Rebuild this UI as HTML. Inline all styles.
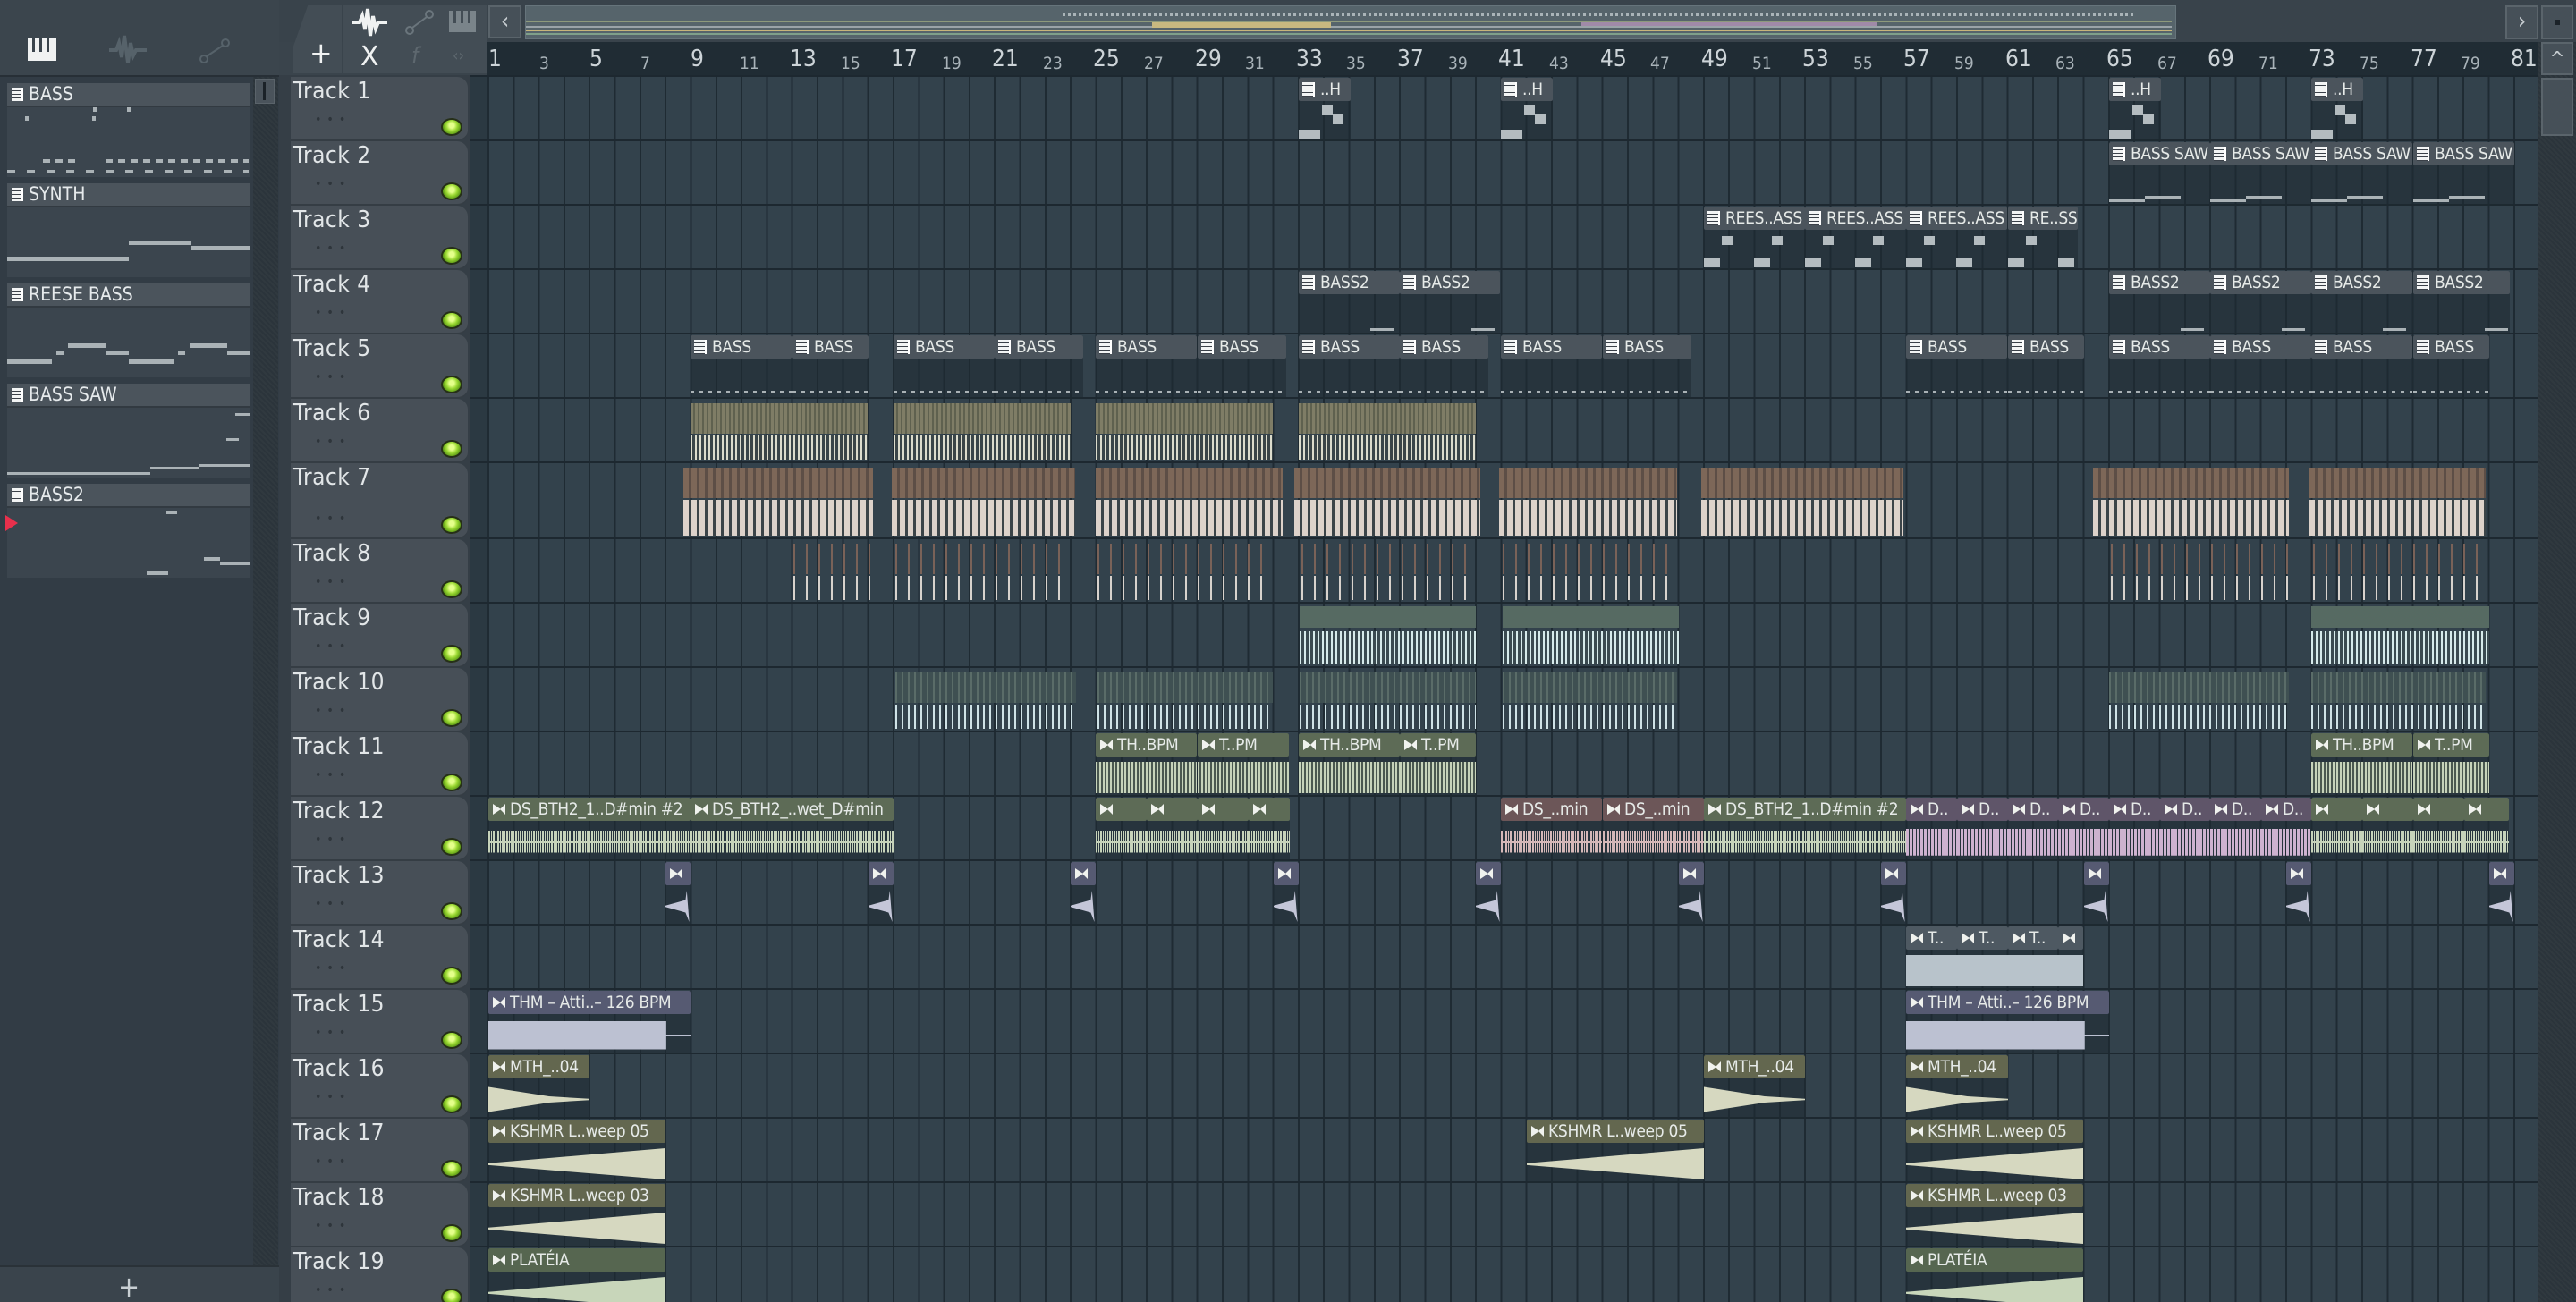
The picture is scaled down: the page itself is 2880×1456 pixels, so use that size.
<!DOCTYPE html>
<html><head><meta charset="utf-8">
<style>
*{box-sizing:border-box;margin:0;padding:0}
html,body{width:2880px;height:1456px;overflow:hidden;background:#3a444c}
body{position:relative;font-family:"Liberation Sans Narrow","DejaVu Sans Condensed","Liberation Sans",sans-serif;color:#dde3e6}
.a{position:absolute}
#grid{position:absolute;left:525px;top:84px;width:2313px;height:1372px;background:#33424c;overflow:hidden}
#grid .lines{position:absolute;left:20px;top:0;right:0;bottom:0;background:repeating-linear-gradient(90deg,#1f2b33 0 2px,transparent 2px 28.31px)}
#grid .dk{position:absolute;left:0;top:0;width:20px;bottom:0;background:#2b3942}
.tl{position:absolute;left:0;right:0;height:2px;background:#1d2830}
.th{position:absolute;left:325px;width:198px;background:#474f57;border-radius:0 12px 12px 0;border-bottom:2px solid #353d44}
.th b{position:absolute;left:3px;top:1px;font-weight:normal;font-size:26px;color:#e2e6e8;letter-spacing:.5px}
.th i{position:absolute;left:27px;top:40px;font-style:normal;font-size:14px;color:#2e353b;letter-spacing:1px}
.th u{position:absolute;left:168px;width:24px;height:20px;border-radius:50%;background:radial-gradient(circle at 50% 40%,#e4ff8a 0 20%,#9ad832 45%,#4e8a10 80%);border:2px solid #263018;bottom:4px}
.c{position:absolute;height:71px;background:rgba(30,42,50,.55);overflow:hidden;border-radius:2px}
.c .h{position:absolute;left:0;top:0;right:0;height:26px;font-size:19px;line-height:26px;padding-left:24px;white-space:nowrap;overflow:hidden;color:#e6eae8;border-radius:2px;letter-spacing:-.3px}
.p .h{background:#4b545c}
.p .h::before{content:"";position:absolute;left:4px;top:5px;width:12px;height:16px;background:repeating-linear-gradient(180deg,#f2f4f4 0 3px,#3a4048 3px 4px);border-right:2px solid #fff}
.au .h::before{content:"";position:absolute;left:5px;top:7px;border-left:9px solid #f0f2ee;border-top:6px solid transparent;border-bottom:6px solid transparent}
.au .h::after{content:"";position:absolute;left:13px;top:7px;border-right:6px solid #f0f2ee;border-top:6px solid transparent;border-bottom:6px solid transparent}
.w{position:absolute;left:0;right:0;top:32px;bottom:4px}
.g .h{background:#5d6b56}.g .w{background:repeating-linear-gradient(90deg,#c6d3ba 0 2px,transparent 2px 3px,#c6d3ba 3px 4px,transparent 4px 5px) center/100% 70% no-repeat,linear-gradient(#c6d3ba,#c6d3ba) center/100% 2px no-repeat}
.pk .h{background:#6c5658}.pk .w{background:repeating-linear-gradient(90deg,#d5b8b8 0 2px,transparent 2px 3px,#d5b8b8 3px 4px,transparent 4px 5px) center/100% 70% no-repeat,linear-gradient(#d5b8b8,#d5b8b8) center/100% 2px no-repeat}
.pu .h{background:#5f5569}.pu .w{background:repeating-linear-gradient(90deg,#cdb2cf 0 3px,transparent 3px 4px) center/100% 85% no-repeat}
.vi .h{background:#565a72}
.vi .w{background:linear-gradient(#bcc1d2,#bcc1d2) left center/88% 90% no-repeat,linear-gradient(#bcc1d2,#bcc1d2) center/100% 2px no-repeat;border-radius:0 18px 18px 0}
.lb .h{background:#4e5962}.lb .w{background:#b8c3cb}
.ol .h{background:#63674f}
.ol .w{background:#d6d8c0;clip-path:polygon(0 48%,100% 0,100% 100%,0 54%)}
.dec .w{background:#d6d8c0;clip-path:polygon(0 10%,60% 40%,100% 48%,100% 52%,60% 60%,0 90%)}
.sm .h{background:#565a72;padding:0}
.sm .w{background:#c4c6d8;clip-path:polygon(0 48%,80% 30%,85% 0,95% 100%,80% 70%,0 52%)}
.s{position:absolute;height:71px;overflow:hidden}
.s .t{position:absolute;left:0;right:0;top:4px;height:34px}
.s .b{position:absolute;left:0;right:0;top:40px;bottom:4px}
#ruler{position:absolute;left:545px;top:47px;width:2293px;height:37px;background:#202c34}
.rn{position:absolute;bottom:3px;color:#cdd4d8;font-size:26px}
.rs{position:absolute;bottom:2px;color:#a9b3b9;font-size:19px}
.ch{position:absolute;left:8px;width:271px}
.ch .hd{height:25px;background:#4b545c;font-size:21px;line-height:25px;padding-left:24px;position:relative;color:#e6eaec}
.ch .hd::before{content:"";position:absolute;left:5px;top:5px;width:11px;height:15px;background:repeating-linear-gradient(180deg,#f2f4f4 0 3px,#3a4048 3px 4px);border-right:2px solid #fff}
.ch .pv{height:80px;background:#3b454e;position:relative;border-top:2px solid #323a41;overflow:hidden}
.n{position:absolute;background:#aab2b6;height:5px}
</style></head><body>

<div class="a" style="left:0;top:0;width:312px;height:84px;background:#3b454d"></div>
<div class="a" style="left:31px;top:42px;width:32px;height:26px;background:#f0f2f2"></div>
<div class="a" style="left:36px;top:42px;width:3px;height:16px;background:#3b454d"></div>
<div class="a" style="left:44px;top:42px;width:3px;height:16px;background:#3b454d"></div>
<div class="a" style="left:52px;top:42px;width:3px;height:16px;background:#3b454d"></div>
<svg class="a" style="left:120px;top:38px" width="44" height="36"><path d="M2 18h8l3-8 3 16 3-24 4 30 3-22 3 14 3-6h12" stroke="#56626a" stroke-width="4" fill="none"/></svg>
<svg class="a" style="left:222px;top:42px" width="36" height="30"><circle cx="6" cy="24" r="4" stroke="#56626a" stroke-width="2" fill="none"/><circle cx="30" cy="6" r="4" stroke="#56626a" stroke-width="2" fill="none"/><path d="M9 21 27 9" stroke="#56626a" stroke-width="2"/></svg>

<div class="a" style="left:0;top:84px;width:312px;height:1331px;background:#323c45;border-top:2px solid #272f36"></div>
<div class="a" style="left:283px;top:86px;width:28px;height:1329px;background:repeating-linear-gradient(45deg,#2b343b 0 2px,#30393f 2px 4px)"></div>
<div class="a" style="left:285px;top:88px;width:22px;height:28px;background:#4a535b;border:1px solid #5a636a"></div>
<div class="a" style="left:294px;top:92px;width:3px;height:20px;background:#1b2228"></div>
<div class="a" style="left:0;top:1415px;width:312px;height:41px;background:#3a444c;border-top:2px solid #2a3238"></div>
<div class="a" style="left:132px;top:1420px;font-size:32px;color:#c8cfd3">+</div>

<div class="ch" style="top:93px"><div class="hd">BASS</div><div class="pv">
<div class="n" style="left:96px;top:0;width:4px;height:5px"></div><div class="n" style="left:134px;top:0;width:4px"></div><div class="n" style="left:20px;top:10px;width:4px"></div><div class="n" style="left:95px;top:10px;width:4px"></div>
<div class="n" style="left:40px;top:58px;width:40px;height:4px;background:repeating-linear-gradient(90deg,#aab2b6 0 8px,transparent 8px 14px)"></div>
<div class="n" style="left:110px;top:58px;width:160px;height:4px;background:repeating-linear-gradient(90deg,#aab2b6 0 8px,transparent 8px 14px)"></div>
<div class="n" style="left:0;top:70px;width:270px;height:4px;background:repeating-linear-gradient(90deg,#aab2b6 0 9px,transparent 9px 22px)"></div>
</div></div>
<div class="ch" style="top:205px"><div class="hd">SYNTH</div><div class="pv">
<div class="n" style="left:0;top:55px;width:136px"></div><div class="n" style="left:136px;top:37px;width:69px"></div><div class="n" style="left:205px;top:43px;width:66px"></div>
</div></div>
<div class="ch" style="top:317px"><div class="hd">REESE BASS</div><div class="pv">
<div class="n" style="left:0;top:58px;width:50px"></div><div class="n" style="left:55px;top:48px;width:8px"></div><div class="n" style="left:68px;top:40px;width:42px"></div><div class="n" style="left:110px;top:48px;width:26px"></div><div class="n" style="left:136px;top:58px;width:50px"></div><div class="n" style="left:191px;top:48px;width:8px"></div><div class="n" style="left:204px;top:40px;width:42px"></div><div class="n" style="left:246px;top:48px;width:25px"></div>
</div></div>
<div class="ch" style="top:429px"><div class="hd">BASS SAW</div><div class="pv">
<div class="n" style="left:0;top:72px;width:160px;height:3px"></div><div class="n" style="left:160px;top:66px;width:55px;height:3px"></div><div class="n" style="left:215px;top:63px;width:56px;height:3px"></div><div class="n" style="left:245px;top:34px;width:14px;height:3px"></div><div class="n" style="left:255px;top:6px;width:16px;height:3px"></div>
</div></div>
<div class="ch" style="top:541px"><div class="hd">BASS2</div><div class="pv">
<div class="n" style="left:178px;top:3px;width:12px;height:4px"></div><div class="n" style="left:220px;top:55px;width:18px;height:4px"></div><div class="n" style="left:238px;top:60px;width:33px;height:4px"></div><div class="n" style="left:156px;top:71px;width:24px;height:4px"></div>
</div></div>
<div class="a" style="left:6px;top:576px;width:0;height:0;border-left:14px solid #e8304c;border-top:9px solid transparent;border-bottom:9px solid transparent"></div>

<div class="a" style="left:312px;top:0;width:2568px;height:47px;background:#39434b"></div>
<div class="a" style="left:328px;top:6px;width:54px;height:76px;background:#434d55;clip-path:polygon(30% 0,100% 0,100% 100%,0 100%,0 60%)"></div>
<div class="a" style="left:384px;top:6px;width:160px;height:76px;background:#434d55"></div>
<div class="a" style="left:346px;top:40px;font-size:34px;color:#f0f2f2">+</div>
<svg class="a" style="left:392px;top:8px" width="44" height="34"><path d="M2 17h8l3-7 3 14 3-22 3 30 3-22 3 14 3-7h10" stroke="#f0f2f2" stroke-width="4" fill="none"/></svg>
<svg class="a" style="left:452px;top:10px" width="34" height="30"><circle cx="6" cy="24" r="4" stroke="#6a757c" stroke-width="2" fill="none"/><circle cx="28" cy="6" r="4" stroke="#6a757c" stroke-width="2" fill="none"/><path d="M9 21 25 9" stroke="#6a757c" stroke-width="2"/></svg>
<div class="a" style="left:502px;top:12px;width:30px;height:24px;background:#7a848a"></div>
<div class="a" style="left:507px;top:12px;width:3px;height:14px;background:#434d55"></div><div class="a" style="left:515px;top:12px;width:3px;height:14px;background:#434d55"></div><div class="a" style="left:523px;top:12px;width:3px;height:14px;background:#434d55"></div>
<div class="a" style="left:403px;top:46px;font-size:30px;color:#f0f2f2;font-family:'DejaVu Sans',sans-serif">X</div>
<div class="a" style="left:460px;top:48px;font-size:26px;color:#5e686f;font-style:italic">f</div>
<div class="a" style="left:506px;top:52px;font-size:18px;color:#5e686f">‹›</div>
<div class="a" style="left:546px;top:6px;width:37px;height:37px;background:#465058;border:2px solid #5a646b;color:#c6ccd0;font-size:26px;line-height:32px;text-align:center">‹</div>
<div class="a" style="left:587px;top:6px;width:1846px;height:38px;background:#56646b;border:1px solid #66747b">
  <div class="a" style="left:0;top:16px;width:1840px;height:2px;background:#8e9a7c"></div>
  <div class="a" style="left:0;top:22px;width:1840px;height:2px;background:#9aa3a8"></div>
  <div class="a" style="left:0;top:26px;width:1840px;height:2px;background:#c7b57a"></div>
  <div class="a" style="left:0;top:30px;width:1840px;height:2px;background:#7fa08a"></div>
  <div class="a" style="left:700px;top:18px;width:200px;height:6px;background:#c8b880"></div>
  <div class="a" style="left:1180px;top:18px;width:330px;height:4px;background:#a08aa8"></div>
  <div class="a" style="left:600px;top:8px;width:1200px;height:3px;background:repeating-linear-gradient(90deg,#aab4b8 0 3px,transparent 3px 6px)"></div>
</div>
<div class="a" style="left:2801px;top:6px;width:37px;height:38px;background:#465058;border:2px solid #5a646b;color:#c6ccd0;font-size:26px;line-height:32px;text-align:center">›</div>
<div class="a" style="left:2841px;top:6px;width:36px;height:38px;background:#465058;border:2px solid #5a646b"></div>
<div class="a" style="left:2856px;top:22px;width:6px;height:6px;background:#1b2228"></div>
<div class="a" style="left:2838px;top:47px;width:42px;height:1409px;background:repeating-linear-gradient(45deg,#2b343b 0 2px,#30393f 2px 4px)"></div>
<div class="a" style="left:2841px;top:47px;width:36px;height:37px;background:#465058;border:2px solid #5a646b;color:#c6ccd0;font-size:22px;text-align:center;line-height:36px">^</div>
<div class="a" style="left:2841px;top:87px;width:36px;height:65px;background:#465058;border:2px solid #5a646b"></div>

<div id="ruler">
<span class="rn" style="left:1px">1</span><span class="rs" style="left:58px">3</span><span class="rn" style="left:114px">5</span><span class="rs" style="left:171px">7</span><span class="rn" style="left:227px">9</span><span class="rs" style="left:282px">11</span><span class="rn" style="left:338px">13</span><span class="rs" style="left:395px">15</span><span class="rn" style="left:451px">17</span><span class="rs" style="left:508px">19</span><span class="rn" style="left:564px">21</span><span class="rs" style="left:621px">23</span><span class="rn" style="left:677px">25</span><span class="rs" style="left:734px">27</span><span class="rn" style="left:791px">29</span><span class="rs" style="left:847px">31</span><span class="rn" style="left:904px">33</span><span class="rs" style="left:960px">35</span><span class="rn" style="left:1017px">37</span><span class="rs" style="left:1074px">39</span><span class="rn" style="left:1130px">41</span><span class="rs" style="left:1187px">43</span><span class="rn" style="left:1244px">45</span><span class="rs" style="left:1300px">47</span><span class="rn" style="left:1357px">49</span><span class="rs" style="left:1414px">51</span><span class="rn" style="left:1470px">53</span><span class="rs" style="left:1527px">55</span><span class="rn" style="left:1583px">57</span><span class="rs" style="left:1640px">59</span><span class="rn" style="left:1697px">61</span><span class="rs" style="left:1753px">63</span><span class="rn" style="left:1810px">65</span><span class="rs" style="left:1867px">67</span><span class="rn" style="left:1923px">69</span><span class="rs" style="left:1980px">71</span><span class="rn" style="left:2036px">73</span><span class="rs" style="left:2093px">75</span><span class="rn" style="left:2150px">77</span><span class="rs" style="left:2206px">79</span><span class="rn" style="left:2262px">81</span>
</div>

<div class="a" style="left:312px;top:84px;width:213px;height:1372px;background:#353e46"></div>
<div class="th" style="top:86px;height:72px"><b>Track 1</b><i>• • •</i><u></u></div>
<div class="th" style="top:158px;height:72px"><b>Track 2</b><i>• • •</i><u></u></div>
<div class="th" style="top:230px;height:72px"><b>Track 3</b><i>• • •</i><u></u></div>
<div class="th" style="top:302px;height:72px"><b>Track 4</b><i>• • •</i><u></u></div>
<div class="th" style="top:374px;height:72px"><b>Track 5</b><i>• • •</i><u></u></div>
<div class="th" style="top:446px;height:72px"><b>Track 6</b><i>• • •</i><u></u></div>
<div class="th" style="top:518px;height:85px"><b>Track 7</b><i style="top:54px">• • •</i><u></u></div>
<div class="th" style="top:603px;height:72px"><b>Track 8</b><i>• • •</i><u></u></div>
<div class="th" style="top:675px;height:72px"><b>Track 9</b><i>• • •</i><u></u></div>
<div class="th" style="top:747px;height:72px"><b>Track 10</b><i>• • •</i><u></u></div>
<div class="th" style="top:819px;height:72px"><b>Track 11</b><i>• • •</i><u></u></div>
<div class="th" style="top:891px;height:72px"><b>Track 12</b><i>• • •</i><u></u></div>
<div class="th" style="top:963px;height:72px"><b>Track 13</b><i>• • •</i><u></u></div>
<div class="th" style="top:1035px;height:72px"><b>Track 14</b><i>• • •</i><u></u></div>
<div class="th" style="top:1107px;height:72px"><b>Track 15</b><i>• • •</i><u></u></div>
<div class="th" style="top:1179px;height:72px"><b>Track 16</b><i>• • •</i><u></u></div>
<div class="th" style="top:1251px;height:72px"><b>Track 17</b><i>• • •</i><u></u></div>
<div class="th" style="top:1323px;height:72px"><b>Track 18</b><i>• • •</i><u></u></div>
<div class="th" style="top:1395px;height:72px"><b>Track 19</b><i>• • •</i><u></u></div>

<div id="grid"><div class="dk"></div><div class="lines"></div>
<div class="tl" style="top:0"></div><div class="tl" style="top:72px"></div><div class="tl" style="top:144px"></div><div class="tl" style="top:216px"></div><div class="tl" style="top:288px"></div><div class="tl" style="top:360px"></div><div class="tl" style="top:432px"></div><div class="tl" style="top:517px"></div><div class="tl" style="top:589px"></div><div class="tl" style="top:661px"></div><div class="tl" style="top:733px"></div><div class="tl" style="top:805px"></div><div class="tl" style="top:877px"></div><div class="tl" style="top:949px"></div><div class="tl" style="top:1021px"></div><div class="tl" style="top:1093px"></div><div class="tl" style="top:1165px"></div><div class="tl" style="top:1237px"></div><div class="tl" style="top:1309px"></div>
</div>

<!-- Track 1 -->
<div class="c p" style="left:1452px;top:87px;width:58px"><div class="h">..H</div><div class="a" style="left:26px;top:30px;width:12px;height:12px;background:#b4bcc0"></div><div class="a" style="left:38px;top:40px;width:12px;height:12px;background:#b4bcc0"></div><div class="a" style="left:0;top:58px;width:24px;height:10px;background:#b4bcc0"></div></div>
<div class="c p" style="left:1678px;top:87px;width:58px"><div class="h">..H</div><div class="a" style="left:26px;top:30px;width:12px;height:12px;background:#b4bcc0"></div><div class="a" style="left:38px;top:40px;width:12px;height:12px;background:#b4bcc0"></div><div class="a" style="left:0;top:58px;width:24px;height:10px;background:#b4bcc0"></div></div>
<div class="c p" style="left:2358px;top:87px;width:58px"><div class="h">..H</div><div class="a" style="left:26px;top:30px;width:12px;height:12px;background:#b4bcc0"></div><div class="a" style="left:38px;top:40px;width:12px;height:12px;background:#b4bcc0"></div><div class="a" style="left:0;top:58px;width:24px;height:10px;background:#b4bcc0"></div></div>
<div class="c p" style="left:2584px;top:87px;width:58px"><div class="h">..H</div><div class="a" style="left:26px;top:30px;width:12px;height:12px;background:#b4bcc0"></div><div class="a" style="left:38px;top:40px;width:12px;height:12px;background:#b4bcc0"></div><div class="a" style="left:0;top:58px;width:24px;height:10px;background:#b4bcc0"></div></div>
<!-- Track 2 -->
<div class="c p" style="left:2358px;top:159px;width:113px"><div class="h">BASS SAW</div><div class="n" style="left:0;top:64px;width:40px;height:3px"></div><div class="n" style="left:40px;top:60px;width:40px;height:3px"></div></div>
<div class="c p" style="left:2471px;top:159px;width:113px"><div class="h">BASS SAW</div><div class="n" style="left:0;top:64px;width:40px;height:3px"></div><div class="n" style="left:40px;top:60px;width:40px;height:3px"></div></div>
<div class="c p" style="left:2584px;top:159px;width:113px"><div class="h">BASS SAW</div><div class="n" style="left:0;top:64px;width:40px;height:3px"></div><div class="n" style="left:40px;top:60px;width:40px;height:3px"></div></div>
<div class="c p" style="left:2698px;top:159px;width:113px"><div class="h">BASS SAW</div><div class="n" style="left:0;top:64px;width:40px;height:3px"></div><div class="n" style="left:40px;top:60px;width:40px;height:3px"></div></div>
<!-- Track 3 -->
<div class="c p" style="left:1905px;top:231px;width:113px"><div class="h">REES..ASS</div><div class="a" style="left:20px;top:33px;width:12px;height:10px;background:#b4bcc0"></div><div class="a" style="left:76px;top:33px;width:12px;height:10px;background:#b4bcc0"></div><div class="a" style="left:0;top:58px;width:18px;height:10px;background:#b4bcc0"></div><div class="a" style="left:56px;top:58px;width:18px;height:10px;background:#b4bcc0"></div></div>
<div class="c p" style="left:2018px;top:231px;width:113px"><div class="h">REES..ASS</div><div class="a" style="left:20px;top:33px;width:12px;height:10px;background:#b4bcc0"></div><div class="a" style="left:76px;top:33px;width:12px;height:10px;background:#b4bcc0"></div><div class="a" style="left:0;top:58px;width:18px;height:10px;background:#b4bcc0"></div><div class="a" style="left:56px;top:58px;width:18px;height:10px;background:#b4bcc0"></div></div>
<div class="c p" style="left:2131px;top:231px;width:113px"><div class="h">REES..ASS</div><div class="a" style="left:20px;top:33px;width:12px;height:10px;background:#b4bcc0"></div><div class="a" style="left:76px;top:33px;width:12px;height:10px;background:#b4bcc0"></div><div class="a" style="left:0;top:58px;width:18px;height:10px;background:#b4bcc0"></div><div class="a" style="left:56px;top:58px;width:18px;height:10px;background:#b4bcc0"></div></div>
<div class="c p" style="left:2245px;top:231px;width:78px"><div class="h">RE..SS</div><div class="a" style="left:20px;top:33px;width:12px;height:10px;background:#b4bcc0"></div><div class="a" style="left:0;top:58px;width:18px;height:10px;background:#b4bcc0"></div><div class="a" style="left:56px;top:58px;width:18px;height:10px;background:#b4bcc0"></div></div>
<!-- Track 4 -->
<div class="c p" style="left:1452px;top:303px;width:113px"><div class="h">BASS2</div><div class="n" style="left:80px;top:64px;width:26px;height:3px"></div></div>
<div class="c p" style="left:1565px;top:303px;width:112px"><div class="h">BASS2</div><div class="n" style="left:80px;top:64px;width:26px;height:3px"></div></div>
<div class="c p" style="left:2358px;top:303px;width:113px"><div class="h">BASS2</div><div class="n" style="left:80px;top:64px;width:26px;height:3px"></div></div>
<div class="c p" style="left:2471px;top:303px;width:113px"><div class="h">BASS2</div><div class="n" style="left:80px;top:64px;width:26px;height:3px"></div></div>
<div class="c p" style="left:2584px;top:303px;width:113px"><div class="h">BASS2</div><div class="n" style="left:80px;top:64px;width:26px;height:3px"></div></div>
<div class="c p" style="left:2698px;top:303px;width:108px"><div class="h">BASS2</div><div class="n" style="left:80px;top:64px;width:26px;height:3px"></div></div>
<!-- Track 5 -->
<div class="c p" style="left:772px;top:375px;width:113px"><div class="h">BASS</div><div class="n" style="left:0;top:62px;right:0;height:3px;width:auto;background:repeating-linear-gradient(90deg,#aab2b6 0 4px,transparent 4px 10px)"></div></div>
<div class="c p" style="left:886px;top:375px;width:85px"><div class="h">BASS</div><div class="n" style="left:0;top:62px;right:0;height:3px;width:auto;background:repeating-linear-gradient(90deg,#aab2b6 0 4px,transparent 4px 10px)"></div></div>
<div class="c p" style="left:999px;top:375px;width:113px"><div class="h">BASS</div><div class="n" style="left:0;top:62px;right:0;height:3px;width:auto;background:repeating-linear-gradient(90deg,#aab2b6 0 4px,transparent 4px 10px)"></div></div>
<div class="c p" style="left:1112px;top:375px;width:99px"><div class="h">BASS</div><div class="n" style="left:0;top:62px;right:0;height:3px;width:auto;background:repeating-linear-gradient(90deg,#aab2b6 0 4px,transparent 4px 10px)"></div></div>
<div class="c p" style="left:1225px;top:375px;width:113px"><div class="h">BASS</div><div class="n" style="left:0;top:62px;right:0;height:3px;width:auto;background:repeating-linear-gradient(90deg,#aab2b6 0 4px,transparent 4px 10px)"></div></div>
<div class="c p" style="left:1339px;top:375px;width:99px"><div class="h">BASS</div><div class="n" style="left:0;top:62px;right:0;height:3px;width:auto;background:repeating-linear-gradient(90deg,#aab2b6 0 4px,transparent 4px 10px)"></div></div>
<div class="c p" style="left:1452px;top:375px;width:113px"><div class="h">BASS</div><div class="n" style="left:0;top:62px;right:0;height:3px;width:auto;background:repeating-linear-gradient(90deg,#aab2b6 0 4px,transparent 4px 10px)"></div></div>
<div class="c p" style="left:1565px;top:375px;width:99px"><div class="h">BASS</div><div class="n" style="left:0;top:62px;right:0;height:3px;width:auto;background:repeating-linear-gradient(90deg,#aab2b6 0 4px,transparent 4px 10px)"></div></div>
<div class="c p" style="left:1678px;top:375px;width:113px"><div class="h">BASS</div><div class="n" style="left:0;top:62px;right:0;height:3px;width:auto;background:repeating-linear-gradient(90deg,#aab2b6 0 4px,transparent 4px 10px)"></div></div>
<div class="c p" style="left:1792px;top:375px;width:99px"><div class="h">BASS</div><div class="n" style="left:0;top:62px;right:0;height:3px;width:auto;background:repeating-linear-gradient(90deg,#aab2b6 0 4px,transparent 4px 10px)"></div></div>
<div class="c p" style="left:2131px;top:375px;width:113px"><div class="h">BASS</div><div class="n" style="left:0;top:62px;right:0;height:3px;width:auto;background:repeating-linear-gradient(90deg,#aab2b6 0 4px,transparent 4px 10px)"></div></div>
<div class="c p" style="left:2245px;top:375px;width:85px"><div class="h">BASS</div><div class="n" style="left:0;top:62px;right:0;height:3px;width:auto;background:repeating-linear-gradient(90deg,#aab2b6 0 4px,transparent 4px 10px)"></div></div>
<div class="c p" style="left:2358px;top:375px;width:113px"><div class="h">BASS</div><div class="n" style="left:0;top:62px;right:0;height:3px;width:auto;background:repeating-linear-gradient(90deg,#aab2b6 0 4px,transparent 4px 10px)"></div></div>
<div class="c p" style="left:2471px;top:375px;width:113px"><div class="h">BASS</div><div class="n" style="left:0;top:62px;right:0;height:3px;width:auto;background:repeating-linear-gradient(90deg,#aab2b6 0 4px,transparent 4px 10px)"></div></div>
<div class="c p" style="left:2584px;top:375px;width:113px"><div class="h">BASS</div><div class="n" style="left:0;top:62px;right:0;height:3px;width:auto;background:repeating-linear-gradient(90deg,#aab2b6 0 4px,transparent 4px 10px)"></div></div>
<div class="c p" style="left:2698px;top:375px;width:85px"><div class="h">BASS</div><div class="n" style="left:0;top:62px;right:0;height:3px;width:auto;background:repeating-linear-gradient(90deg,#aab2b6 0 4px,transparent 4px 10px)"></div></div>

<!-- Track 6 -->
<div class="s" style="left:772px;top:447px;width:198px"><div class="t" style="background:repeating-linear-gradient(90deg,#7f7d66 0 3px,#5f614f 3px 5px)"></div><div class="b" style="background:repeating-linear-gradient(90deg,#dcdccc 0 2px,#3a4548 2px 5px)"></div></div>
<div class="s" style="left:999px;top:447px;width:198px"><div class="t" style="background:repeating-linear-gradient(90deg,#7f7d66 0 3px,#5f614f 3px 5px)"></div><div class="b" style="background:repeating-linear-gradient(90deg,#dcdccc 0 2px,#3a4548 2px 5px)"></div></div>
<div class="s" style="left:1225px;top:447px;width:198px"><div class="t" style="background:repeating-linear-gradient(90deg,#7f7d66 0 3px,#5f614f 3px 5px)"></div><div class="b" style="background:repeating-linear-gradient(90deg,#dcdccc 0 2px,#3a4548 2px 5px)"></div></div>
<div class="s" style="left:1452px;top:447px;width:198px"><div class="t" style="background:repeating-linear-gradient(90deg,#7f7d66 0 3px,#5f614f 3px 5px)"></div><div class="b" style="background:repeating-linear-gradient(90deg,#dcdccc 0 2px,#3a4548 2px 5px)"></div></div>
<!-- Track 7 -->
<div class="s" style="left:764px;top:519px;width:212px;height:84px"><div class="t" style="background:repeating-linear-gradient(90deg,#7d6758 0 6px,#5d4e46 6px 9px)"></div><div class="b" style="background:repeating-linear-gradient(90deg,#ddd2ca 0 6px,#3c4448 6px 9px)"></div></div>
<div class="s" style="left:997px;top:519px;width:205px;height:84px"><div class="t" style="background:repeating-linear-gradient(90deg,#7d6758 0 6px,#5d4e46 6px 9px)"></div><div class="b" style="background:repeating-linear-gradient(90deg,#ddd2ca 0 6px,#3c4448 6px 9px)"></div></div>
<div class="s" style="left:1225px;top:519px;width:209px;height:84px"><div class="t" style="background:repeating-linear-gradient(90deg,#7d6758 0 6px,#5d4e46 6px 9px)"></div><div class="b" style="background:repeating-linear-gradient(90deg,#ddd2ca 0 6px,#3c4448 6px 9px)"></div></div>
<div class="s" style="left:1447px;top:519px;width:208px;height:84px"><div class="t" style="background:repeating-linear-gradient(90deg,#7d6758 0 6px,#5d4e46 6px 9px)"></div><div class="b" style="background:repeating-linear-gradient(90deg,#ddd2ca 0 6px,#3c4448 6px 9px)"></div></div>
<div class="s" style="left:1676px;top:519px;width:199px;height:84px"><div class="t" style="background:repeating-linear-gradient(90deg,#7d6758 0 6px,#5d4e46 6px 9px)"></div><div class="b" style="background:repeating-linear-gradient(90deg,#ddd2ca 0 6px,#3c4448 6px 9px)"></div></div>
<div class="s" style="left:1902px;top:519px;width:226px;height:84px"><div class="t" style="background:repeating-linear-gradient(90deg,#7d6758 0 6px,#5d4e46 6px 9px)"></div><div class="b" style="background:repeating-linear-gradient(90deg,#ddd2ca 0 6px,#3c4448 6px 9px)"></div></div>
<div class="s" style="left:2340px;top:519px;width:219px;height:84px"><div class="t" style="background:repeating-linear-gradient(90deg,#7d6758 0 6px,#5d4e46 6px 9px)"></div><div class="b" style="background:repeating-linear-gradient(90deg,#ddd2ca 0 6px,#3c4448 6px 9px)"></div></div>
<div class="s" style="left:2582px;top:519px;width:197px;height:84px"><div class="t" style="background:repeating-linear-gradient(90deg,#7d6758 0 6px,#5d4e46 6px 9px)"></div><div class="b" style="background:repeating-linear-gradient(90deg,#ddd2ca 0 6px,#3c4448 6px 9px)"></div></div>
<!-- Track 8 -->
<div class="s" style="left:887px;top:604px;width:93px"><div class="t" style="background:repeating-linear-gradient(90deg,#7a6258 0 2px,transparent 2px 14px)"></div><div class="b" style="background:repeating-linear-gradient(90deg,#d8d2cc 0 2px,transparent 2px 14px)"></div></div>
<div class="s" style="left:1001px;top:604px;width:195px"><div class="t" style="background:repeating-linear-gradient(90deg,#7a6258 0 2px,transparent 2px 14px)"></div><div class="b" style="background:repeating-linear-gradient(90deg,#d8d2cc 0 2px,transparent 2px 14px)"></div></div>
<div class="s" style="left:1227px;top:604px;width:195px"><div class="t" style="background:repeating-linear-gradient(90deg,#7a6258 0 2px,transparent 2px 14px)"></div><div class="b" style="background:repeating-linear-gradient(90deg,#d8d2cc 0 2px,transparent 2px 14px)"></div></div>
<div class="s" style="left:1455px;top:604px;width:195px"><div class="t" style="background:repeating-linear-gradient(90deg,#7a6258 0 2px,transparent 2px 14px)"></div><div class="b" style="background:repeating-linear-gradient(90deg,#d8d2cc 0 2px,transparent 2px 14px)"></div></div>
<div class="s" style="left:1680px;top:604px;width:195px"><div class="t" style="background:repeating-linear-gradient(90deg,#7a6258 0 2px,transparent 2px 14px)"></div><div class="b" style="background:repeating-linear-gradient(90deg,#d8d2cc 0 2px,transparent 2px 14px)"></div></div>
<div class="s" style="left:2360px;top:604px;width:199px"><div class="t" style="background:repeating-linear-gradient(90deg,#7a6258 0 2px,transparent 2px 14px)"></div><div class="b" style="background:repeating-linear-gradient(90deg,#d8d2cc 0 2px,transparent 2px 14px)"></div></div>
<div class="s" style="left:2586px;top:604px;width:193px"><div class="t" style="background:repeating-linear-gradient(90deg,#7a6258 0 2px,transparent 2px 14px)"></div><div class="b" style="background:repeating-linear-gradient(90deg,#d8d2cc 0 2px,transparent 2px 14px)"></div></div>
<!-- Track 9 -->
<div class="s" style="left:1453px;top:676px;width:197px"><div class="t" style="top:2px;height:24px;background:#566a62"></div><div class="b" style="top:30px;background:repeating-linear-gradient(90deg,#d6eaea 0 2px,#3a4a50 2px 5px)"></div></div>
<div class="s" style="left:1680px;top:676px;width:197px"><div class="t" style="top:2px;height:24px;background:#566a62"></div><div class="b" style="top:30px;background:repeating-linear-gradient(90deg,#d6eaea 0 2px,#3a4a50 2px 5px)"></div></div>
<div class="s" style="left:2584px;top:676px;width:199px"><div class="t" style="top:2px;height:24px;background:#566a62"></div><div class="b" style="top:30px;background:repeating-linear-gradient(90deg,#d6eaea 0 2px,#3a4a50 2px 5px)"></div></div>
<!-- Track 10 -->
<div class="s" style="left:1001px;top:748px;width:202px"><div class="t" style="background:repeating-linear-gradient(90deg,#5a6c68 0 2px,#3f5052 2px 7px)"></div><div class="b" style="background:repeating-linear-gradient(90deg,#cfe2e6 0 2px,transparent 2px 7px)"></div></div>
<div class="s" style="left:1227px;top:748px;width:196px"><div class="t" style="background:repeating-linear-gradient(90deg,#5a6c68 0 2px,#3f5052 2px 7px)"></div><div class="b" style="background:repeating-linear-gradient(90deg,#cfe2e6 0 2px,transparent 2px 7px)"></div></div>
<div class="s" style="left:1453px;top:748px;width:197px"><div class="t" style="background:repeating-linear-gradient(90deg,#5a6c68 0 2px,#3f5052 2px 7px)"></div><div class="b" style="background:repeating-linear-gradient(90deg,#cfe2e6 0 2px,transparent 2px 7px)"></div></div>
<div class="s" style="left:1680px;top:748px;width:195px"><div class="t" style="background:repeating-linear-gradient(90deg,#5a6c68 0 2px,#3f5052 2px 7px)"></div><div class="b" style="background:repeating-linear-gradient(90deg,#cfe2e6 0 2px,transparent 2px 7px)"></div></div>
<div class="s" style="left:2358px;top:748px;width:201px"><div class="t" style="background:repeating-linear-gradient(90deg,#5a6c68 0 2px,#3f5052 2px 7px)"></div><div class="b" style="background:repeating-linear-gradient(90deg,#cfe2e6 0 2px,transparent 2px 7px)"></div></div>
<div class="s" style="left:2584px;top:748px;width:195px"><div class="t" style="background:repeating-linear-gradient(90deg,#5a6c68 0 2px,#3f5052 2px 7px)"></div><div class="b" style="background:repeating-linear-gradient(90deg,#cfe2e6 0 2px,transparent 2px 7px)"></div></div>
<!-- Track 11 -->
<div class="c au g" style="left:1225px;top:820px;width:113px"><div class="h">TH..BPM</div><div class="w" style="background:repeating-linear-gradient(90deg,#c6d3ba 0 2px,#4a5850 2px 4px)"></div></div>
<div class="c au g" style="left:1339px;top:820px;width:102px"><div class="h">T..PM</div><div class="w" style="background:repeating-linear-gradient(90deg,#c6d3ba 0 2px,#4a5850 2px 4px)"></div></div>
<div class="c au g" style="left:1452px;top:820px;width:113px"><div class="h">TH..BPM</div><div class="w" style="background:repeating-linear-gradient(90deg,#c6d3ba 0 2px,#4a5850 2px 4px)"></div></div>
<div class="c au g" style="left:1565px;top:820px;width:85px"><div class="h">T..PM</div><div class="w" style="background:repeating-linear-gradient(90deg,#c6d3ba 0 2px,#4a5850 2px 4px)"></div></div>
<div class="c au g" style="left:2584px;top:820px;width:113px"><div class="h">TH..BPM</div><div class="w" style="background:repeating-linear-gradient(90deg,#c6d3ba 0 2px,#4a5850 2px 4px)"></div></div>
<div class="c au g" style="left:2698px;top:820px;width:85px"><div class="h">T..PM</div><div class="w" style="background:repeating-linear-gradient(90deg,#c6d3ba 0 2px,#4a5850 2px 4px)"></div></div>
<!-- Track 12 -->
<div class="c au g" style="left:546px;top:892px;width:226px"><div class="h">DS_BTH2_1..D#min #2</div><div class="w"></div></div>
<div class="c au g" style="left:772px;top:892px;width:227px"><div class="h">DS_BTH2_..wet_D#min</div><div class="w"></div></div>
<div class="c au g" style="left:1225px;top:892px;width:57px"><div class="h"></div><div class="w"></div></div>
<div class="c au g" style="left:1282px;top:892px;width:57px"><div class="h"></div><div class="w"></div></div>
<div class="c au g" style="left:1339px;top:892px;width:57px"><div class="h"></div><div class="w"></div></div>
<div class="c au g" style="left:1396px;top:892px;width:46px"><div class="h"></div><div class="w"></div></div>
<div class="c au pk" style="left:1678px;top:892px;width:113px"><div class="h">DS_..min</div><div class="w"></div></div>
<div class="c au pk" style="left:1792px;top:892px;width:113px"><div class="h">DS_..min</div><div class="w"></div></div>
<div class="c au g" style="left:1905px;top:892px;width:226px"><div class="h">DS_BTH2_1..D#min #2</div><div class="w"></div></div>
<div class="c au pu" style="left:2131px;top:892px;width:57px"><div class="h">D..</div><div class="w"></div></div>
<div class="c au pu" style="left:2188px;top:892px;width:57px"><div class="h">D..</div><div class="w"></div></div>
<div class="c au pu" style="left:2245px;top:892px;width:56px"><div class="h">D..</div><div class="w"></div></div>
<div class="c au pu" style="left:2301px;top:892px;width:57px"><div class="h">D..</div><div class="w"></div></div>
<div class="c au pu" style="left:2358px;top:892px;width:57px"><div class="h">D..</div><div class="w"></div></div>
<div class="c au pu" style="left:2415px;top:892px;width:56px"><div class="h">D..</div><div class="w"></div></div>
<div class="c au pu" style="left:2471px;top:892px;width:57px"><div class="h">D..</div><div class="w"></div></div>
<div class="c au pu" style="left:2528px;top:892px;width:56px"><div class="h">D..</div><div class="w"></div></div>
<div class="c au g" style="left:2584px;top:892px;width:57px"><div class="h"></div><div class="w"></div></div>
<div class="c au g" style="left:2641px;top:892px;width:57px"><div class="h"></div><div class="w"></div></div>
<div class="c au g" style="left:2698px;top:892px;width:57px"><div class="h"></div><div class="w"></div></div>
<div class="c au g" style="left:2755px;top:892px;width:50px"><div class="h"></div><div class="w"></div></div>
<!-- Track 13 -->
<div class="c au sm" style="left:744px;top:964px;width:28px"><div class="h"></div><div class="w"></div></div>
<div class="c au sm" style="left:971px;top:964px;width:28px"><div class="h"></div><div class="w"></div></div>
<div class="c au sm" style="left:1197px;top:964px;width:28px"><div class="h"></div><div class="w"></div></div>
<div class="c au sm" style="left:1424px;top:964px;width:28px"><div class="h"></div><div class="w"></div></div>
<div class="c au sm" style="left:1650px;top:964px;width:28px"><div class="h"></div><div class="w"></div></div>
<div class="c au sm" style="left:1877px;top:964px;width:28px"><div class="h"></div><div class="w"></div></div>
<div class="c au sm" style="left:2103px;top:964px;width:28px"><div class="h"></div><div class="w"></div></div>
<div class="c au sm" style="left:2330px;top:964px;width:28px"><div class="h"></div><div class="w"></div></div>
<div class="c au sm" style="left:2556px;top:964px;width:28px"><div class="h"></div><div class="w"></div></div>
<div class="c au sm" style="left:2783px;top:964px;width:28px"><div class="h"></div><div class="w"></div></div>
<!-- Track 14 -->
<div class="c au lb" style="left:2131px;top:1036px;width:57px"><div class="h">T..</div><div class="w"></div></div>
<div class="c au lb" style="left:2188px;top:1036px;width:57px"><div class="h">T..</div><div class="w"></div></div>
<div class="c au lb" style="left:2245px;top:1036px;width:56px"><div class="h">T..</div><div class="w"></div></div>
<div class="c au lb" style="left:2301px;top:1036px;width:28px"><div class="h"></div><div class="w"></div></div>
<!-- Track 15 -->
<div class="c au vi" style="left:546px;top:1108px;width:226px"><div class="h">THM – Atti..– 126 BPM</div><div class="w"></div></div>
<div class="c au vi" style="left:2131px;top:1108px;width:227px"><div class="h">THM – Atti..– 126 BPM</div><div class="w"></div></div>
<!-- Track 16 -->
<div class="c au ol dec" style="left:546px;top:1180px;width:113px"><div class="h">MTH_..04</div><div class="w"></div></div>
<div class="c au ol dec" style="left:1905px;top:1180px;width:113px"><div class="h">MTH_..04</div><div class="w"></div></div>
<div class="c au ol dec" style="left:2131px;top:1180px;width:114px"><div class="h">MTH_..04</div><div class="w"></div></div>
<!-- Track 17 -->
<div class="c au ol" style="left:546px;top:1252px;width:198px"><div class="h">KSHMR L..weep 05</div><div class="w"></div></div>
<div class="c au ol" style="left:1707px;top:1252px;width:198px"><div class="h">KSHMR L..weep 05</div><div class="w"></div></div>
<div class="c au ol" style="left:2131px;top:1252px;width:198px"><div class="h">KSHMR L..weep 05</div><div class="w"></div></div>
<!-- Track 18 -->
<div class="c au ol" style="left:546px;top:1324px;width:198px"><div class="h">KSHMR L..weep 03</div><div class="w"></div></div>
<div class="c au ol" style="left:2131px;top:1324px;width:198px"><div class="h">KSHMR L..weep 03</div><div class="w"></div></div>
<!-- Track 19 -->
<div class="c au ol" style="left:546px;top:1396px;width:198px"><div class="h" style="background:#566650">PLATÉIA</div><div class="w" style="background:#c8d6ba"></div></div>
<div class="c au ol" style="left:2131px;top:1396px;width:198px"><div class="h" style="background:#566650">PLATÉIA</div><div class="w" style="background:#c8d6ba"></div></div>

</body></html>
